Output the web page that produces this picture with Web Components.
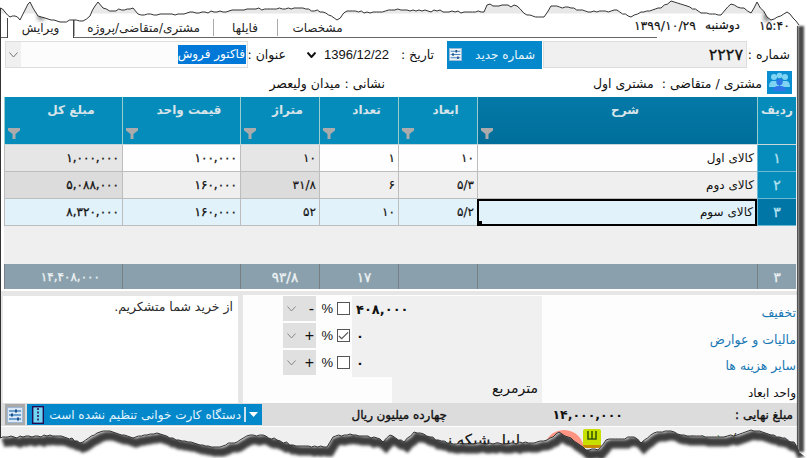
<!DOCTYPE html>
<html dir="rtl"><head><meta charset="utf-8">
<style>html,body{margin:0;padding:0;overflow:hidden;background:#fff}body{width:807px;height:458px;font:12px "DejaVu Sans",sans-serif;color:#111;direction:rtl}</style>
</head><body>
<invoice-window>
  <top-bar slot="top"></top-bar>
  <invoice-form slot="form"></invoice-form>
  <data-grid slot="grid"></data-grid>
  <totals-panel slot="totals"></totals-panel>
  <status-bar slot="status"></status-bar>
</invoice-window>
<script>
const sliderIcon=(s,bg='#eef3f8')=>`<svg width="${s}" height="${s}" viewBox="0 0 16 16"><rect x=".5" y=".5" width="15" height="15" fill="${bg}" stroke="#9db8d4"/><path d="M2 4h12M2 8h12M2 12h12" stroke="#4a86c4" stroke-width="1.400"/><path d="M9 2.500v3M5 6.500v3M11 10.500v3" stroke="#1d4f86" stroke-width="2"/></svg>`;
const def=(n,html,init)=>customElements.define(n,class extends HTMLElement{constructor(){super();this.attachShadow({mode:'open'}).innerHTML=html;init&&init(this.shadowRoot)}});

def('invoice-window',`<style>:host{display:block;position:relative;width:807px;height:458px;overflow:hidden;direction:rtl}
.c{display:flex;flex-direction:column;width:796px;margin-right:10px;height:100%}</style>
<div class="c"><slot name="top"></slot><slot name="form"></slot><slot name="grid"></slot><slot name="totals"></slot><slot name="status"></slot></div><torn-edges></torn-edges>`);

def('top-bar',`<style>:host{display:flex;box-sizing:border-box;height:39px;padding-top:18px;align-items:stretch;font-size:12px}
.clock{display:flex;align-items:center;padding:0 7px 0 0;width:155px;box-sizing:border-box;gap:9px;height:14px;-webkit-text-stroke:.15px #111}
.clock b{font-weight:400;width:41px;margin-left:10px;font-size:12.500px}
.clock .dg{font-size:12.500px}
.tabs{flex:1;display:flex;border-bottom:1px solid #666;margin-right:-15px}
.t{height:19px;display:flex;align-items:center;justify-content:center;box-sizing:border-box;position:relative;color:#222}
.t::after{content:"";position:absolute;left:0;top:1px;height:17px;width:1px;background:#aaa}
.sp{flex:1}
.t.a{background:#fff;border:1px solid #444;border-top:0;border-bottom:0;height:20px;margin-bottom:-1px;width:67px;margin-left:6px}
.t.a::after{display:none}.top{display:flex;flex:1}</style>
<div class="top"><div class="clock"><b>۱۵:۴۰</b><span>دوشنبه</span><span class="dg">۱۳۹۹/۱۰/۲۹</span></div>
<div class="tabs"><div class="sp"></div><div class="t" style="width:81px">مشخصات</div><div class="t" style="width:64px">فایلها</div><div class="t" style="width:139px;letter-spacing:-.35px">مشتری/متقاضی/پروژه</div><div class="t a">ویرایش</div></div></div>`);

def('invoice-form',`<style>:host{display:block;font-size:12.500px}
.r1{display:flex;align-items:center;height:31px;box-sizing:border-box;padding-top:2px}
.r2{display:flex;align-items:center;height:28px;position:relative}
.in{width:204px;height:27px;box-sizing:border-box;background:#f0f0f0;border:1px solid #ddd;margin:0 6px 0 1px;display:flex;align-items:center;padding-right:3px;font-size:16px;line-height:1;-webkit-text-stroke:.3px #111}
.lb{width:44px;padding-right:7px;box-sizing:border-box;white-space:nowrap}
button{all:unset;box-sizing:border-box;width:95px;height:28px;background:#0488cc;color:#eaf6fb;display:flex;align-items:center;padding-right:7px;gap:13px;font:12px "DejaVu Sans",sans-serif}
.dt{direction:ltr;font:13px "Liberation Sans",sans-serif;display:flex;align-items:center;width:83px;gap:8px;margin-right:12px}
.title{white-space:nowrap}
.sel{width:243px;height:27px;box-sizing:border-box;border:1px solid #ddd;margin-right:2px;background:#fcfcfc;display:flex}
.sel span{background:#0078d7;color:#fff;height:19px;line-height:19px;margin:3px 1px 0 0;padding:0 1px;white-space:nowrap;width:68px;box-sizing:border-box;font-size:12px}
.sel i{margin-right:auto;width:15px;background:#f0f0f0;display:flex;align-items:center;justify-content:center}
.ico{width:25px;height:23px;background:#0a8ed2;margin:-2px 5px 0 5px;flex:none}
.addr{position:absolute;right:412px;top:7px;white-space:nowrap}</style>
<div class="r1"><div class="lb">شماره :</div><div class="in">۲۲۲۷</div><button><span>شماره جدید</span>${sliderIcon(13)}</button>
<div class="title" style="margin-right:13px;width:32px">تاریخ :</div>
<div class="dt"><svg width="9" height="6" viewBox="0 0 9 6"><path d="M.5.5 4.500 5 8.500.5" fill="none" stroke="#111" stroke-width="2"/></svg><span>1396/12/22</span></div>
<div class="title" style="margin-right:21px;width:36px">عنوان :</div>
<div class="sel"><span>فاکتور فروش</span><i><svg width="9" height="6" viewBox="0 0 9 6"><path d="M.5.5 4.500 5 8.500.5" fill="none" stroke="#777"/></svg></i></div></div>
<div class="r2"><div class="ico"><svg width="25" height="23" viewBox="0 0 25 23"><g fill="#7fd4f4"><circle cx="7" cy="6" r="3"/><circle cx="12.500" cy="4.500" r="2.800"/><circle cx="18" cy="6" r="3"/><path d="M2 16c0-6 3-6 5-6s5 0 5 6zM13 16c0-6 3-6 5-6s5 0 5 6z"/></g><g fill="#2f77e8"><circle cx="12.500" cy="11" r="3.200"/><path d="M6 20c0-5 4-5 6.500-5s6.500 0 6.500 5z"/></g></svg></div>
<div>مشتری / متقاضی :&nbsp; مشتری اول</div><div class="addr">نشانی : میدان ولیعصر</div></div>`);

const FUN=`<svg width="12" height="11" viewBox="0 0 12 11"><path d="M0 0h12v2.500L7.500 6v5h-3V6L0 2.500z" fill="#ababab"/></svg>`;
const HEAD=['ردیف','شرح','ابعاد','تعداد','متراژ','قیمت واحد','مبلغ کل'];
const ROWS=[['۱','کالای اول','۱۰','۱','۱۰','۱۰۰,۰۰۰','۱,۰۰۰,۰۰۰'],['۲','کالای دوم','۵/۳','۶','۳۱/۸','۱۶۰,۰۰۰','۵,۰۸۸,۰۰۰'],['۳','کالای سوم','۵/۲','۱۰','۵۲','۱۶۰,۰۰۰','۸,۳۲۰,۰۰۰']];
const FOOT=['۳','','','۱۷','۹۳/۸','','۱۴,۴۰۸,۰۰۰'];
def('data-grid',`<style>:host{display:block;margin:0 1px 0 0;width:792px;height:194px;background:#efefef;font-size:12px;position:relative}
.g{display:grid;grid-template-columns:39px 280px 79px 79px 79px 118px 118px}
.h{height:47px;background:#058cba;color:#d8e4e9;font-weight:700;box-sizing:border-box;border-left:1px solid #9cc;position:relative;text-align:center;padding:6px 0 0 15px}
.h.first{padding-left:0}
.h.s{background:linear-gradient(#0479a8,#006e9a)}
.h svg{position:absolute;left:3px;bottom:5px}
.d{height:27px;box-sizing:border-box;border-left:1px solid #bdbdbd;border-bottom:1px solid #bdbdbd;display:flex;align-items:center;padding:0 3px 1px 5px;white-space:nowrap;-webkit-text-stroke:.2px #111}
.d.tx{font-size:12px;-webkit-text-stroke:0}
.d.m{letter-spacing:-.5px;-webkit-text-stroke:.3px #111}
.num{background:#058cba!important;color:#b8e2f0;justify-content:center;border-color:#6fb8d3;padding:0;font-size:14px;-webkit-text-stroke:.3px #b8e2f0}
.num.on{background:#0076a6!important}
.gp{height:1px;grid-column:1/-1;background:#c9d6da}
.fill{height:38px}
.f{height:25px;background:#8aa1ad;color:#eef3f5;border-left:1px solid #777f85;display:flex;align-items:center;justify-content:center;font-size:13.500px;box-sizing:border-box;-webkit-text-stroke:.3px #eef3f5}
.f.o{padding-left:10px}
.f.x{justify-content:flex-start;padding-right:22px;font-size:12px;letter-spacing:-.3px}
.sel{position:relative;border:2px solid #000!important;background:#e1f2fa;padding-right:2px}
.sel::after{content:"";position:absolute;left:-2px;bottom:-2px;width:5px;height:5px;background:#000}
.low{height:2px;background:#fff;width:792px}</style><div class="g" id="g"></div><div class="low"></div>`,r=>{
 let h='';HEAD.forEach((t,i)=>{h+=`<div class="h ${i==1?'s':''} ${i==0?'first':''}">${t}${i?FUN:''}</div>`});h+='<div class="gp"></div>';
 ROWS.forEach((row,ri)=>row.forEach((t,i)=>{
  const bg=ri==2?'#e1f2fa':(i==4||i==6)?(ri==0?'#e6e6e6':'#dcdcdc'):(ri==0?'#fefefe':'#efefef');
  const cls=i==0?('num'+(ri==2?' on':'')):(i==1?'tx':(i>=5?'m':''))+(ri==2&&i==1?' sel':'');
  h+=`<div class="d ${cls}" style="background:${bg}">${t}</div>`}));
 h+='<div class="fill" style="grid-column:1/-1"></div>';
 FOOT.forEach((t,i)=>{h+=`<div class="f ${i==6?'x':(i==3||i==4?'o':'')}">${t}</div>`});
 r.getElementById('g').innerHTML=h});

const row=(sign,val,checked,bold)=>`<div class="rw"><div class="v ${bold?'b':''}">${val}</div><div class="c"><span class="box">${checked?'<svg width="12" height="10" viewBox="0 0 12 10"><path d="M1 5l3 3 7-7" fill="none" stroke="#555" stroke-width="1.300"/></svg>':''}</span><span class="pc">%</span></div><div class="dd"><span>${sign}</span><svg width="9" height="6" viewBox="0 0 9 6"><path d="M.5.5 4.500 5 8.500.5" fill="none" stroke="#888"/></svg></div></div>`;
def('totals-panel',`<style>:host{display:flex;height:112px;box-sizing:border-box;background:#e6e6e6;padding-top:4px;font-size:12.500px}
.l{width:255px;background:#fdfdfd;padding-top:1px;display:flex;flex-direction:column;color:#1878b4}
.l div{height:27px;display:flex;align-items:center;padding-right:1px;position:relative;top:3px}
.l div:last-child{color:#111;font-size:12px}
.m{width:299px;background:#fdfdfd;display:flex;flex-direction:column;gap:2px;padding-top:1px;box-sizing:border-box}
.rw{display:flex;height:25px}
.v{width:190px;background:#f0f0f0;height:27px;margin-bottom:-2px;display:flex;align-items:center;justify-content:flex-end;padding-left:4px;box-sizing:border-box}
.v.b{font-weight:700;font-size:13px}
.c{width:36px;display:flex;align-items:center;padding:0 2px;gap:4px;box-sizing:border-box}
.box{width:13px;height:13px;border:1px solid #555;box-sizing:border-box;display:flex;align-items:center;justify-content:center;background:#fff}
.pc{font:13px "Liberation Sans",sans-serif}
.dd{width:33px;background:#e0e0e0;display:flex;align-items:center;justify-content:space-between;padding:0 2px 0 4px;box-sizing:border-box;font:16px "Liberation Sans",sans-serif}
.unit{display:flex;height:25px}.unit div{width:150px;background:#f0f0f0;height:26px;padding:3px 4px 0 0;box-sizing:border-box;white-space:nowrap;font-size:14px}
.t{width:235px;margin-right:5px;background:#fff;padding:3px 5px;box-sizing:border-box;color:#2a2a2a;height:107px;margin-top:1px}</style>
<div class="l"><div>تخفیف</div><div>مالیات و عوارض</div><div>سایر هزینه ها</div><div>واحد ابعاد</div></div>
<div class="m">${row('-','۴۰۸,۰۰۰',false,true)}${row('+','۰',true,true)}${row('+','۰',false,true)}<div class="unit"><div>مترمربع</div></div></div>
<div class="t">از خرید شما متشکریم.</div>`);

def('status-bar',`<style>:host{display:block;font-size:12px}
.s{display:flex;height:23px;background:#dcdcdc;align-items:center}
.st{-webkit-text-stroke:.35px #111}
.a{width:66px;padding-right:4px;box-sizing:border-box;white-space:nowrap}.n{margin-right:108px;width:66px;font-size:12.500px;font-weight:700;white-space:nowrap}
.w{margin-right:110px;white-space:nowrap;width:67px;letter-spacing:-.2px}.ri{margin-right:7px;white-space:nowrap}
.blue{width:235px;height:21px;margin-right:auto;background:#0488cc;color:#e6f6fc;display:flex;align-items:center;box-sizing:border-box;padding:0 3px 0 5px}
.car{width:12px;display:flex;justify-content:center}
.sep{width:2px;height:15px;background:#cfe3ee;margin:0 1px 0 3px}
.tx{flex:1;white-space:nowrap}
.i{width:20px;height:21px;background:#a9a9a9;margin:0 2px 0 4px;display:flex;align-items:center;justify-content:center}
.under{height:31px;border-top:1px solid #fff;background:#efefef;position:relative;overflow:hidden}
.u1{position:absolute;right:8px;top:5px;white-space:nowrap}.u1 em{font-style:normal;color:#3a7a1e;font-size:10px}
.u2{position:absolute;right:277px;top:4px;white-space:nowrap;font-size:15px;-webkit-text-stroke:.2px #111}
.circ{position:absolute;right:213px;top:3px;width:40px;height:40px;border-radius:50%;background:#ff9382}
.tag{position:absolute;right:196px;top:2px;width:18px;height:19px;background:#c8e000;border-radius:2px 2px 3px 3px;border-bottom:3px solid #c88a00;box-sizing:border-box;display:flex;justify-content:center;padding-top:1px}
</style>
<div class="s"><div class="a st">مبلغ نهایی :</div><div class="n">۱۴,۰۰۰,۰۰۰</div><div class="w st">چهارده میلیون</div><div class="ri st">ریال</div>
<div class="blue"><div class="car"><svg width="9" height="5" viewBox="0 0 9 5"><path d="M0 0h9L4.500 5z" fill="#fff"/></svg></div><div class="sep"></div><span class="tx">دستگاه کارت خوانی تنظیم نشده است</span><svg width="12" height="18" viewBox="0 0 12 18"><rect x=".7" y=".7" width="10.600" height="16.600" fill="#72d6f2" stroke="#240a52" stroke-width="1.400"/><path d="M6 2v14" stroke="#240a52" stroke-width="1.500" stroke-dasharray="2 1.500"/></svg></div>
<div class="i">${sliderIcon(16,'#dbe8f5')}</div></div>
<div class="under"><div class="u1">پرسنل(ص) : <em>(تهران)</em></div><div class="u2">لیبل شبکه نرم</div><div class="circ"></div><div class="tag"><svg width="12" height="13" viewBox="0 0 12 13"><path d="M2 1v8h8V1M6 1v8" fill="none" stroke="#3a5a00" stroke-width="1.600"/></svg></div></div>`);

def('torn-edges',`<style>:host{position:absolute;inset:0;display:block;pointer-events:none}svg{position:absolute;left:0;top:0}</style>
<svg width="807" height="458" id="s"></svg>`,r=>{
 const top=[0,8,5,12,10,17,15,16,20,20,25,10,28,4,30,2,33,8,38,16,45,18,63,22,73,20,83,21,90,16,95,6,98,2,103,8,113,11,133,8,138,14,157,15,187,13,217,12,253,9,300,8,323,12,337,20,347,11,367,12,404,10,464,12,484,12,487,5,517,6,527,15,544,17,551,6,571,8,591,12,617,10,631,17,641,12,661,8,671,1,687,6,701,13,721,15,731,4,744,8,751,13,757,2,767,17,771,20,787,12,799,25];
 const bot=[0,438,8,437,23,437,50,435,67,438,72,438,80,443,100,432,110,431,133,438,147,435,157,433,173,438,200,445,217,447,240,440,250,435,263,435,277,440,293,445,327,447,333,437,350,434,377,438,383,442,390,435,404,442,414,432,430,437,447,443,484,444,514,443,537,442,547,440,559,432,571,438,580,445,586,450,598,450,606,440,634,437,641,443,654,433,671,431,681,435,724,437,737,435,751,430,771,435,794,442,799,452];
 let seed=7;const rnd=()=>{seed=(seed*16807)%2147483647;return seed/2147483647};
 const wob=a=>{let p=[];for(let i=0;i<a.length-2;i+=2){const dx=a[i+2]-a[i],n=Math.max(1,Math.round(dx/3));for(let k=0;k<n;k++){const t=k/n;p.push([+(a[i]+dx*t).toFixed(1),Math.round(a[i+1]+(a[i+3]-a[i+1])*t+(k?(rnd()-.5)*1.8:0))])}}p.push([a[a.length-2],a[a.length-1]]);return p};
 const str=p=>p.map(q=>q.join(',')).join(' ');
 const T=str(wob(top)),B=str(wob(bot));
 r.getElementById('s').innerHTML=`<defs><filter id="b" x="-5%" y="-100%" width="110%" height="300%"><feGaussianBlur stdDeviation="1.500"/></filter>
 <filter id="b2" x="-200%" y="-5%" width="500%" height="110%"><feGaussianBlur stdDeviation="1.300"/></filter>
 <filter id="b3" x="-100%" y="-100%" width="300%" height="300%"><feGaussianBlur stdDeviation="2"/></filter>
 <clipPath id="cb"><polygon points="${B} 807,458 0,458"/></clipPath></defs>
 <rect x="1" y="0" width="796" height="13.500" fill="#e8e8e8"/>
 <rect x="797" y="0" width="10" height="458" fill="#fff"/>
 <rect x="798" y="26" width="6" height="426" fill="#4a4a4a" filter="url(#b2)"/>
 <rect x="797" y="26" width="1" height="426" fill="#555"/>
 <rect x="38" y="12" width="6" height="8" fill="#777" filter="url(#b3)"/><rect x="764" y="12" width="6" height="9" fill="#777" filter="url(#b3)"/>
 <polygon points="${T} 807,0 0,0" fill="#fff"/><polyline points="${T}" fill="none" stroke="#333" stroke-width="1"/>
 <polygon points="${B} 807,458 0,458" fill="#fff"/>
 <g clip-path="url(#cb)"><g transform="translate(3,5)"><polyline points="${B}" fill="none" stroke="#3c3c3c" stroke-width="9" filter="url(#b)"/></g></g>
 <polyline points="${B}" fill="none" stroke="#333" stroke-width="1"/>
 <rect x="0" y="8" width="1" height="430" fill="#333"/>`;
});
</script></body></html>
